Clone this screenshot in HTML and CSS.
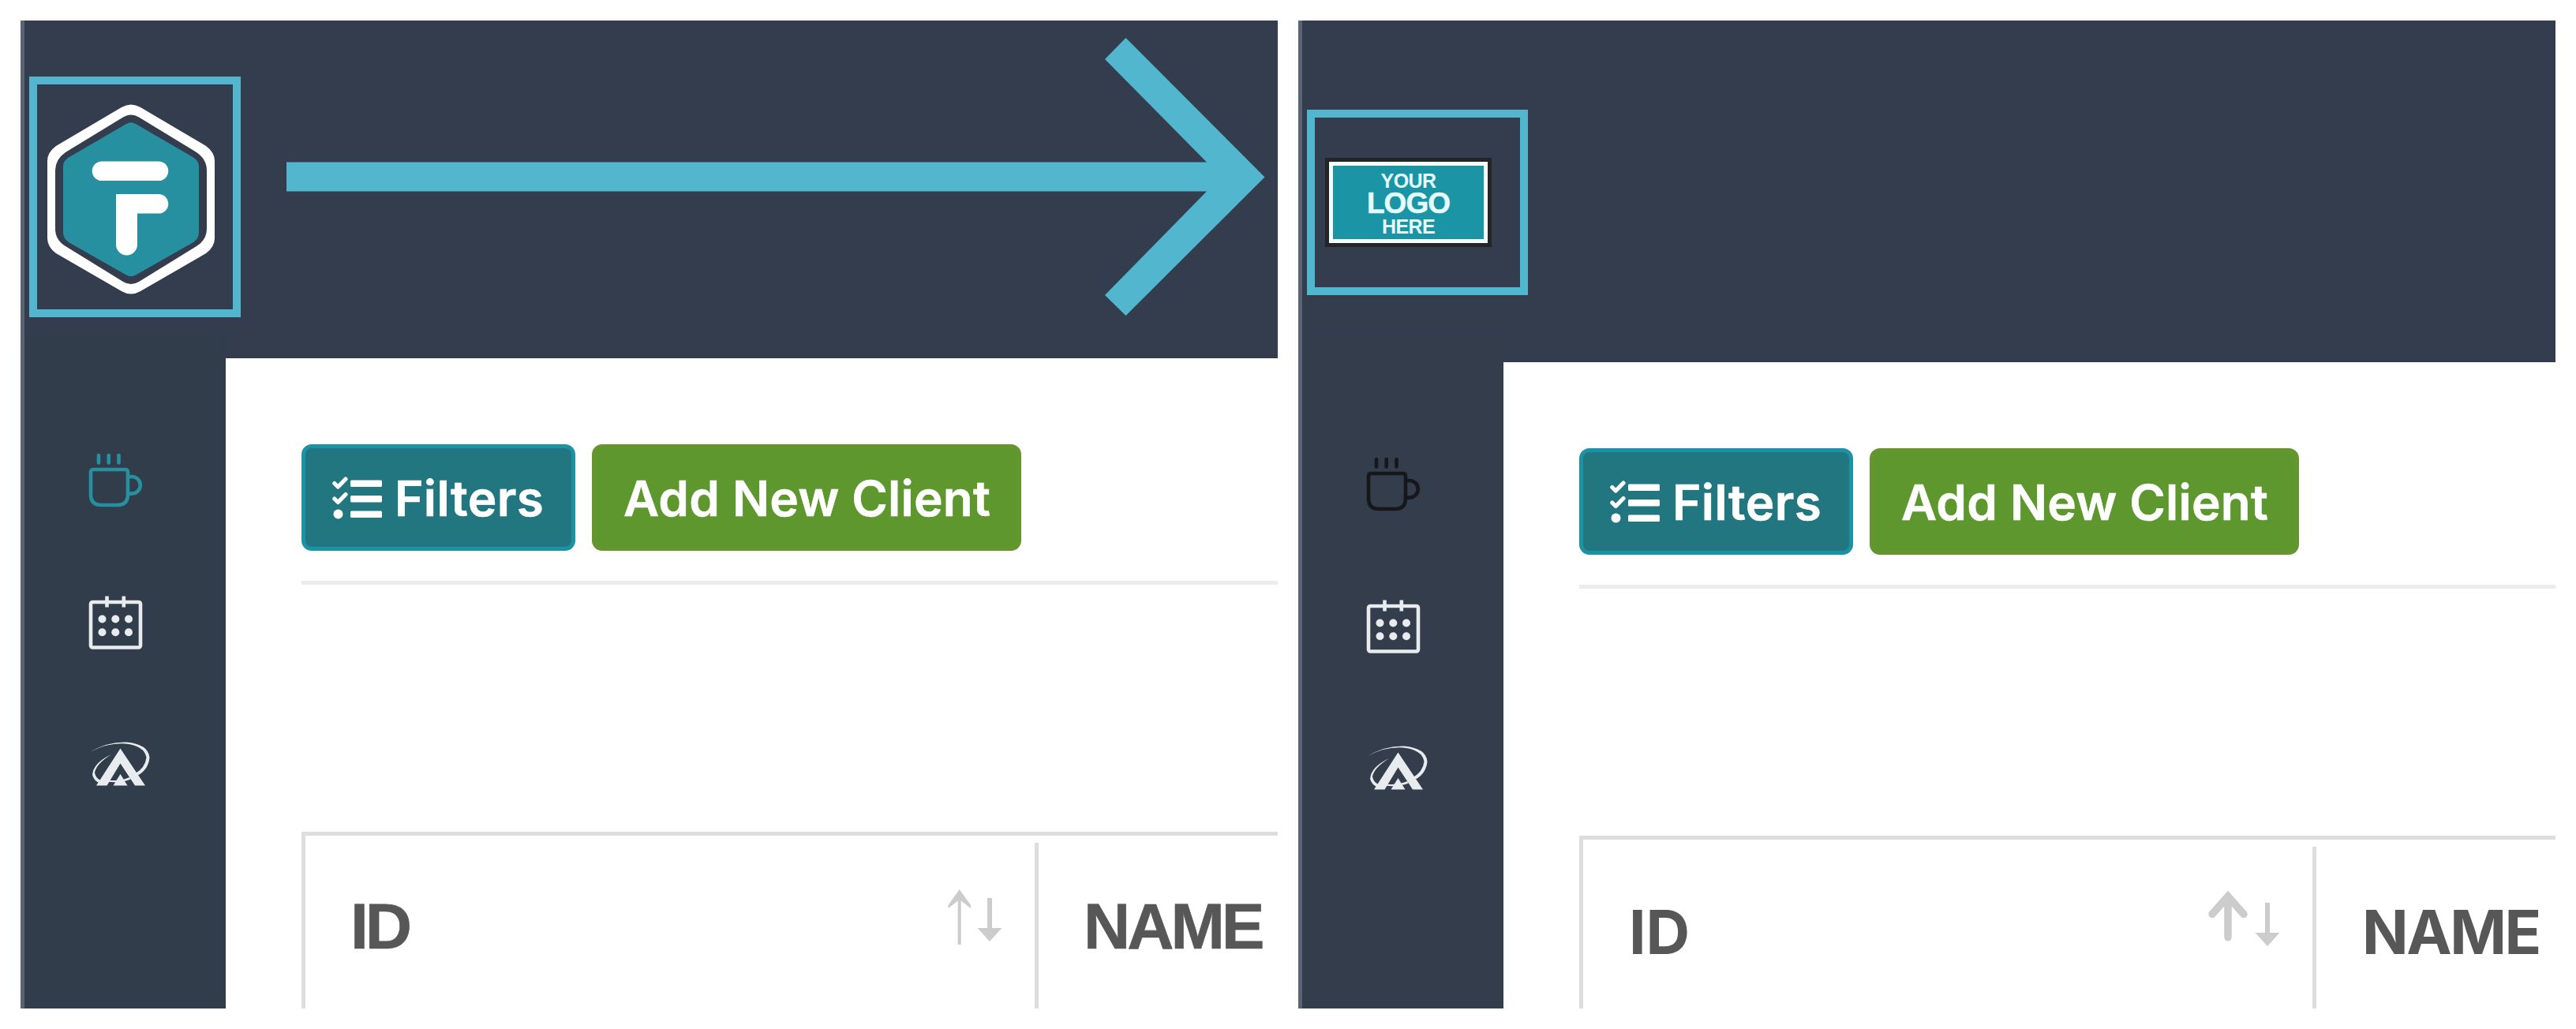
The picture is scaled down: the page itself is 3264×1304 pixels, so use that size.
FILE: index.html
```html
<!DOCTYPE html>
<html lang="en">
<head>
<meta charset="utf-8">
<title>Custom logo: before and after</title>
<link rel="stylesheet" href="styles.css">
</head>
<body>
<svg class="defs" aria-hidden="true">
  <symbol id="coffee" viewBox="0 0 80 80">
    <g fill="none" stroke="currentColor" stroke-width="4.600" stroke-linecap="round">
      <path d="M15 6v9.500M27.700 6v9.500M40.500 6v9.500"/>
      <path d="M8.500 24h40q3.500 0 3.500 3.500v28q0 13.500-13 13.500h-21q-13 0-13-13.500v-28q0-3.500 3.500-3.500z"/>
      <path d="M52 33h5a10.800 10.800 0 0 1 0 21.600h-5"/>
    </g>
  </symbol>
  <symbol id="calendar" viewBox="0 0 80 80">
    <g fill="none" stroke="currentColor" stroke-width="4.600">
      <rect x="5" y="11" width="63" height="57.500" rx="2.500"/>
      <path d="M25.500 3.500v14M46.800 3.500v14"/>
    </g>
    <g fill="currentColor">
      <circle cx="19.500" cy="32.500" r="5"/><circle cx="36.300" cy="32.500" r="5"/><circle cx="53" cy="32.500" r="5"/>
      <circle cx="19.500" cy="49.300" r="5"/><circle cx="36.300" cy="49.300" r="5"/><circle cx="53" cy="49.300" r="5"/>
    </g>
  </symbol>
  <symbol id="orbit" viewBox="0 0 80 80">
    <g fill="currentColor">
      <path d="M42.500 15.500L74 62.500H61L42.500 34.500 25.500 62.500H12z"/>
      <path d="M42.500 48L51.500 62.500H33.500z"/>
      <path d="M4 20Q26 7 50 7.500Q78 10 79.500 27Q78 43 63 50.500L61 47.500Q74 40 75.500 27Q73 12 49 9.500Q26 8 4 20z"/>
      <path d="M31 23Q8 34 7 49Q9 56 15 59L17.500 56Q11 53 10 46Q12 35 31 23z"/>
      <path d="M28 55.500Q42 57.500 54 52L55.500 54.500Q42 60 26 57.500z"/>
    </g>
  </symbol>
  <symbol id="tasks" viewBox="0 0 64 54">
    <g fill="currentColor">
      <rect x="23" y="4.500" width="40" height="8.500" rx="1.500"/>
      <rect x="23" y="24" width="40" height="8.500" rx="1.500"/>
      <rect x="23" y="43.500" width="40" height="8.500" rx="1.500"/>
      <circle cx="7.500" cy="47.500" r="6"/>
    </g>
    <path d="M2.800 8.500l4.500 4.500L17 3M2.800 28l4.500 4.500L17 22.500" fill="none" stroke="currentColor" stroke-width="5.200" stroke-linecap="round" stroke-linejoin="round"/>
  </symbol>
</svg>

<section class="panel before">
  <aside class="side">
    <div class="brand">
      <svg class="hexlogo" viewBox="0 0 212 241">
        <path fill="#fff" d="M94 4Q106-3 118 4L201 53Q212 61 212 72V170Q212 181 201 189L118 237Q106 244 94 237L11 189Q0 181 0 170V72Q0 61 11 53z"/>
        <path fill="#343d4e" d="M96 16.500Q106 10.500 116 16.500L189 61Q202 70 202 84V158Q202 172 189 180L116 225Q106 231 96 225L23 180Q10 172 10 158V84Q10 70 23 61z"/>
        <path fill="#2690a0" d="M100 25Q106 21.500 112 25L185 67.500Q192 72 192 79V163Q192 170 185 175L112 216.500Q106 220 100 216.500L27 175Q20 170 20 163V79Q20 72 27 67.500z"/>
        <path fill="#fff" d="M69 72.500h72a12.300 12.300 0 0 1 0 24.600H69a12.300 12.300 0 0 1 0-24.600zM87 114h54a12.300 12.300 0 0 1 0 24.600h-27V178a13.300 13.300 0 0 1-27 0z"/>
      </svg>
    </div>
    <nav class="nav">
      <svg class="icon active"><use href="#coffee"/></svg>
      <svg class="icon"><use href="#calendar"/></svg>
      <svg class="icon"><use href="#orbit"/></svg>
    </nav>
  </aside>
  <main class="main">
    <header class="topbar"></header>
    <div class="content">
      <div class="actions">
        <button class="btn filters"><svg class="tasks"><use href="#tasks"/></svg><span>Filters</span></button>
        <button class="btn add"><span>Add New Client</span></button>
      </div>
      <div class="table">
        <div class="th id"><span>ID</span>
          <svg class="sort" viewBox="0 0 96 80" fill="none" stroke="#ccc">
            <path d="M42.700 76V10" stroke-width="4"/><path fill="#ccc" stroke="none" d="M42.700 6L57 26V30L42.700 19 28.500 30V26z"/>
            <path d="M81 17V60" stroke-width="6"/><path fill="#ccc" stroke="none" d="M65.500 55H96.500L81 72z"/>
          </svg>
        </div>
        <div class="th name"><span>NAME</span></div>
      </div>
    </div>
  </main>
  <div class="highlight"></div>
  <svg class="arrow" viewBox="0 0 1240 354"><path fill="#52b6cf" d="M0 158.500H1166L1037 28 1063.500 1 1239.500 177.500 1063.500 353 1037 327 1166 195.500H0z"/></svg>
</section>

<section class="panel after">
  <aside class="side">
    <div class="brand">
      <div class="sign"><span>YOUR</span><strong>LOGO</strong><span>HERE</span></div>
    </div>
    <nav class="nav">
      <svg class="icon active"><use href="#coffee"/></svg>
      <svg class="icon"><use href="#calendar"/></svg>
      <svg class="icon"><use href="#orbit"/></svg>
    </nav>
  </aside>
  <main class="main">
    <header class="topbar"></header>
    <div class="content">
      <div class="actions">
        <button class="btn filters"><svg class="tasks"><use href="#tasks"/></svg><span>Filters</span></button>
        <button class="btn add"><span>Add New Client</span></button>
      </div>
      <div class="table">
        <div class="th id"><span>ID</span>
          <svg class="sort" viewBox="0 0 96 80" fill="none" stroke="#ccc">
            <path d="M31 61V10M11 31.500L31 9 51 31.500" stroke-width="9.500" stroke-linecap="round"/>
            <path d="M81 17V60" stroke-width="6"/><path fill="#ccc" stroke="none" d="M65.500 55H96.500L81 72z"/>
          </svg>
        </div>
        <div class="th name"><span>NAME</span></div>
      </div>
    </div>
  </main>
  <div class="highlight"></div>
</section>
</body>
</html>
```
FILE: styles.css
```css
* { box-sizing: border-box; }
body {
  margin: 0;
  height: 1304px;
  padding: 26px;
  display: grid;
  grid-template-columns: 1593px 1593px;
  gap: 26px;
  background: #fff;
  font-family: Inter, "Liberation Sans", sans-serif;
  overflow: hidden;
}
.defs { position: absolute; width: 0; height: 0; }

.panel {
  position: relative;
  display: flex;
  height: 1252px;
  border-left: 5px solid #596472;
  background: #343d4e;
  overflow: hidden;
}
.side { width: 255px; flex: none; display: flex; flex-direction: column; }
.brand { height: 399px; flex: none; padding: 106px 0 0 29px; }
.hexlogo { display: block; width: 212px; height: 241px; }
.nav { flex: 1; padding: 146px 0 0 79px; display: flex; flex-direction: column; gap: 101px; background: #323d4b; }
.icon { width: 80px; height: 80px; color: #e8ecee; flex: none; }
.before .icon.active { color: #2690a0; }

.main { flex: 1; min-width: 0; display: flex; flex-direction: column; }
.topbar { height: 428px; flex: none; background: #343d4e; }
.content { flex: 1; background: #fff; padding: 109px 0 0 96px; display: flex; flex-direction: column; }
.actions { display: flex; gap: 21px; height: 178px; flex: none; border-bottom: 5px solid #e8eeee; }
.btn {
  height: 135px;
  border: 5px solid;
  border-radius: 13px;
  padding: 3px 0 0;
  display: flex;
  align-items: center;
  color: #fff;
  font: 600 62px/76px Inter, sans-serif;
  letter-spacing: 0.200px;
  -webkit-text-stroke: 0.600px #fff;
  white-space: nowrap;
}
.filters { width: 347px; padding-left: 34px; gap: 15px; letter-spacing: 0.400px; background: #22767f; border-color: #1b93a5; }
.add { width: 544px; padding-left: 35px; background: #5e972e; border-color: #64952f; }
.tasks { width: 64px; height: 54px; flex: none; margin-top: -3px; }

.table { flex: 1; margin-top: 313px; border: 5px solid #ddd; border-width: 5px 0 0 5px; display: flex; padding-top: 9px; }
.th { color: #575757; font: 700 82px/92px "Liberation Sans", sans-serif; padding-top: 60px; white-space: nowrap; letter-spacing: -4px; -webkit-text-stroke: 0.600px #575757; }
.th.id { width: 929px; flex: none; display: flex; justify-content: space-between; padding-left: 57px; padding-right: 42px; border-right: 5px solid #ddd; }
.th.name { padding-left: 57px; }
.sort { width: 96px; height: 80px; margin-top: -7px; }

.highlight { position: absolute; left: 6px; top: 71px; width: 268px; height: 305px; border: 10px solid #52b6cf; }
.arrow { position: absolute; left: 332px; top: 21px; width: 1240px; height: 354px; }

.after .nav { background: #343d4c; padding-top: 151px; }
.after .icon.active { color: #15171a; }
.after .topbar { height: 433px; }
.after .brand { padding: 174px 0 0 29px; }
.after .highlight { top: 113px; width: 280px; height: 235px; }
.after .th { font: 700 77px/92px Inter, sans-serif; padding-top: 62px; letter-spacing: 0; -webkit-text-stroke: 0; }
.after .th.id, .after .th.name { padding-left: 58px; }
.after .th.name { letter-spacing: -2.500px; }
.after .sort { margin-top: -8px; }
.sign {
  width: 211px;
  height: 113px;
  display: flex;
  flex-direction: column;
  align-items: center;
  padding-top: 11px;
  background: #1b95a6;
  border: 5px solid #252529;
  box-shadow: inset 0 0 0 5px #f4ffff;
  color: #e4fbff;
  font: 700 25px/26px "Liberation Sans", sans-serif;
  letter-spacing: -0.600px;
}
.sign strong { font-size: 37px; line-height: 32px; letter-spacing: -1px; -webkit-text-stroke: 0.500px #e4fbff; }
```
